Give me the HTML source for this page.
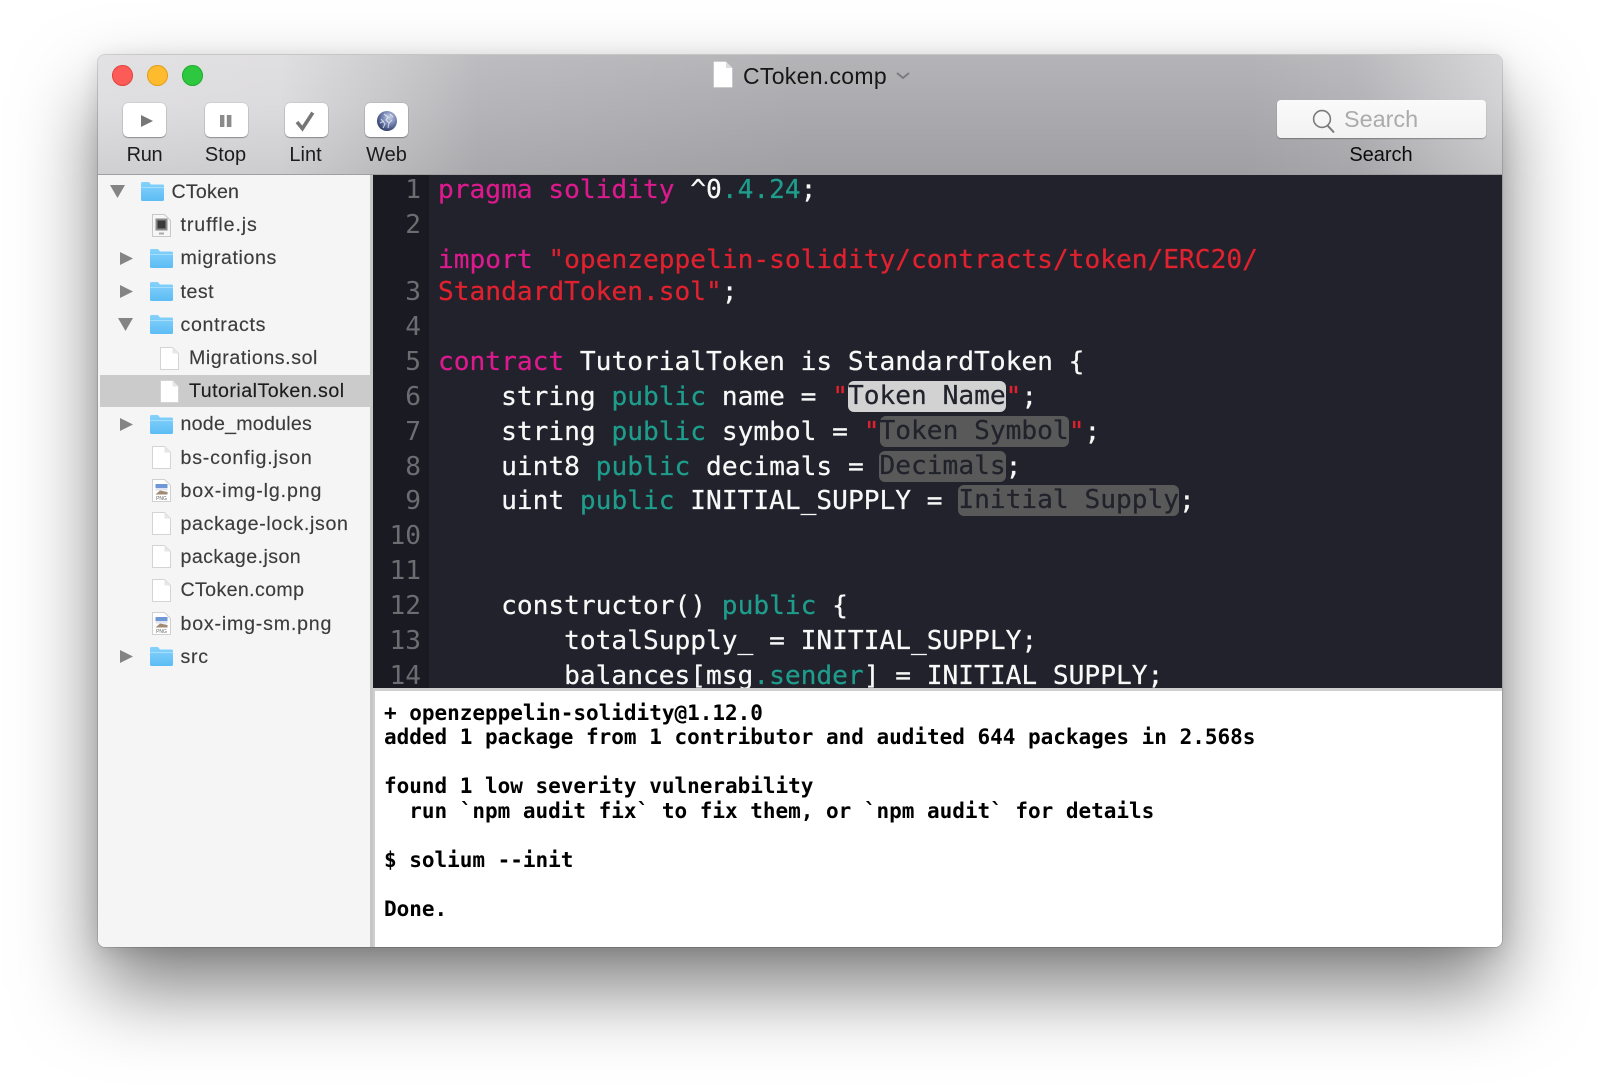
<!DOCTYPE html>
<html><head><meta charset="utf-8"><style>
html,body{margin:0;padding:0;background:#fff;width:1600px;height:1087px;overflow:hidden}
*{box-sizing:border-box}
#win{position:absolute;left:98px;top:55px;width:1404px;height:892px;border-radius:7px;box-shadow:0 42px 80px 0 rgba(0,0,0,.5),0 4px 20px rgba(0,0,0,.12),0 0 0 1px rgba(0,0,0,.13);overflow:hidden;background:#f5f5f5}
#bar{position:absolute;z-index:2;left:0;top:0;width:1404px;height:120px;background:linear-gradient(180deg,rgba(255,255,255,.1),rgba(255,255,255,0) 40%,rgba(0,0,0,.07)),linear-gradient(90deg,#dfdee0 0,#dcdbdd 13%,#b6b5b9 27%,#acabaf 50%,#acabaf 82%,#b4b3b7 90%,#d3d2d5 100%);border-bottom:1px solid #9f9fa0}
.abs{position:absolute}
.light{position:absolute;top:9.5px;width:21px;height:21px;border-radius:50%}
.btn{position:absolute;top:48px;width:43px;height:34px;background:#fff;border-radius:5px;box-shadow:0 1px 1px rgba(0,0,0,.3),0 0 0 .5px rgba(0,0,0,.12)}
.lab{position:absolute;top:86px;height:28px;font:20px/28px "Liberation Sans",sans-serif;color:#1c1c1c;text-align:center}
#side{position:absolute;left:0;top:119px;width:275px;height:773px;background:#f5f5f5;border-right:3px solid #c6c6c6}
.row{position:absolute;height:28px;margin-top:.5px;font:19.6px/28px "Liberation Sans",sans-serif;color:#3c3c3c;white-space:pre;-webkit-text-stroke:.15px #3c3c3c}
svg{position:absolute;overflow:visible}
#editor{position:absolute;left:275px;top:120px;width:1129px;height:513px;background:#21222b;overflow:hidden}
#gut{position:absolute;left:0;top:0;width:56px;height:514px;background:#191a22}
.n,.c{position:absolute;height:34px;font:26.2px/34px "DejaVu Sans Mono",monospace;white-space:pre}
.n{left:0;width:48px;text-align:right;color:#6c6d71}
.c{left:65px;color:#f8f8f8;-webkit-text-stroke:.25px currentColor}
.p{color:#dc1a8e}.r{color:#e0212f}.t{color:#1e9c8c}
.h{background:#595959;color:#21222b;border-radius:6px;display:inline-block;height:31px;line-height:31px;vertical-align:top;margin-top:1px}
.h.a{background:#d2d2d2}
#term{position:absolute;left:275px;top:633px;width:1129px;height:259px;background:#fff;border-top:3px solid #cfcfcf;border-left:2px solid #cfcfcf}
.l{position:absolute;left:9px;height:24px;font:bold 21px/24px "DejaVu Sans Mono",monospace;color:#000;white-space:pre;letter-spacing:-.015px}
</style></head><body>
<div id="win">
<div id="bar">
<div class="light" style="left:14px;background:#fc5b57;box-shadow:inset 0 0 0 1px #e2463f"></div>
<div class="light" style="left:49px;background:#ffbb2e;box-shadow:inset 0 0 0 1px #e09e1e"></div>
<div class="light" style="left:84px;background:#2dc840;box-shadow:inset 0 0 0 1px #22ac30"></div>

<svg style="left:615px;top:6px" width="20" height="27" viewBox="0 0 20 27"><path d="M.5 .5H13L19.5 7V26.5H.5Z" fill="#fff" stroke="#bdbdbd" stroke-width=".6"/><path d="M13 .5V7H19.5Z" fill="#dcdcdc"/></svg>
<div class="abs" style="left:645px;top:5px;font:23px/32px 'Liberation Sans',sans-serif;color:#161616;white-space:pre;letter-spacing:.3px">CToken.comp</div>
<svg style="left:798px;top:17px" width="14" height="7" viewBox="0 0 14 7"><path d="M1 1L7 6L13 1" fill="none" stroke="#7c7c80" stroke-width="2"/></svg>

<div class="btn" style="left:25px"><svg style="left:18px;top:11.5px" width="12" height="12" viewBox="0 0 12 12"><path d="M0 0L12 6L0 12Z" fill="#777"/></svg></div>
<div class="btn" style="left:107px"><svg style="left:15px;top:11.5px" width="12" height="12" viewBox="0 0 12 12"><path d="M0 0H4.4V12H0ZM6.8 0H11.4V12H6.8Z" fill="#8a8a8a"/></svg></div>
<div class="btn" style="left:187px"><svg style="left:10px;top:8px" width="20" height="20" viewBox="0 0 20 20"><path d="M2 11L7.4 17.6L17.8 1.6" fill="none" stroke="#767676" stroke-width="3.6"/></svg></div>
<div class="btn" style="left:267px"><svg style="left:12px;top:7.5px" width="20" height="20" viewBox="0 0 20 20"><defs><radialGradient id="g" cx=".62" cy=".32" r=".75"><stop offset="0" stop-color="#c8d1e8"/><stop offset=".5" stop-color="#6f7fae"/><stop offset="1" stop-color="#2a3560"/></radialGradient></defs><circle cx="10" cy="10" r="10" fill="url(#g)"/><path d="M7 3L11 6L9 9L12 12L15 9M4 8L8 13L6 17M13 3L16 6M3 12L7 10M12 12L11 17" fill="none" stroke="#eef1f8" stroke-width="1.1" opacity=".75"/></svg></div>
<div class="lab" style="left:6.5px;width:80px;letter-spacing:-.3px">Run</div>
<div class="lab" style="left:87.5px;width:80px">Stop</div>
<div class="lab" style="left:167.5px;width:80px">Lint</div>
<div class="lab" style="left:248.5px;width:80px">Web</div>

<div class="abs" style="left:1179px;top:45px;width:209px;height:38px;border-radius:4px;background:linear-gradient(#fafafa,#f2f2f2);box-shadow:0 1px 1px rgba(0,0,0,.3)"></div>
<svg style="left:1214px;top:54.5px" width="24" height="24" viewBox="0 0 24 24"><circle cx="10" cy="9" r="8.4" fill="none" stroke="#7a7a7a" stroke-width="1.6"/><path d="M15.5 15.5L22 22.5" stroke="#7a7a7a" stroke-width="2" fill="none"/></svg>
<div class="abs" style="left:1246px;top:47px;font:23.4px/34px 'Liberation Sans',sans-serif;color:#ababab">Search</div>
<div class="lab" style="left:1233px;width:100px;color:#0c0c0c">Search</div>
</div>

<div id="side">
<svg width="0" height="0" style="position:absolute"><defs>
<linearGradient id="fg" x1="0" y1="0" x2="0" y2="1"><stop offset="0" stop-color="#86d2fb"/><stop offset="1" stop-color="#5cbcf4"/></linearGradient>
<symbol id="folder" viewBox="0 0 23 19"><path d="M1.5 0H8L10 2.5H21.5A1.5 1.5 0 0 1 23 4V17.5A1.5 1.5 0 0 1 21.5 19H1.5A1.5 1.5 0 0 1 0 17.5V1.5A1.5 1.5 0 0 1 1.5 0Z" fill="url(#fg)"/><rect x="0" y="5" width="23" height="1" fill="#a5defc"/></symbol>
<symbol id="file" viewBox="0 0 19 23"><path d="M.5 .5H12.5L18.5 6.5V22.5H.5Z" fill="#fff" stroke="#d4d4d4"/><path d="M12.5 .5V6.5H18.5Z" fill="#e6e6e6"/></symbol>
<symbol id="png" viewBox="0 0 19 23"><path d="M.5 .5H12.5L18.5 6.5V22.5H.5Z" fill="#fff" stroke="#d0d0d0"/><rect x="3.5" y="5" width="12" height="4" fill="#6f97d6"/><rect x="3.5" y="9" width="12" height="2.5" fill="#dfe5ee"/><path d="M3.5 15.5L8 11.5L15.5 13V15.5Z" fill="#a08a72"/><text x="9.5" y="21" font-family="Liberation Sans,sans-serif" font-size="5" text-anchor="middle" fill="#666">PNG</text></symbol>
<symbol id="js" viewBox="0 0 19 23"><path d="M.5 .5H12.5L18.5 6.5V22.5H.5Z" fill="#f6f6f6" stroke="#c8c8c8"/><rect x="3.5" y="4.5" width="12" height="12" fill="#8a8a8a"/><rect x="5.5" y="6.5" width="8" height="8" fill="#3a3a3a"/><rect x="7" y="18.5" width="5" height="2" fill="#aaa"/></symbol>
<symbol id="tr" viewBox="0 0 13 13"><path d="M0 0L13 6.5L0 13Z" fill="#848484"/></symbol>
<symbol id="td" viewBox="0 0 15 13"><path d="M0 0H15L7.5 13Z" fill="#848484"/></symbol>
</defs></svg>

<svg style="left:12px;top:11px" width="15" height="13"><use href="#td"/></svg>
<svg style="left:43px;top:8px" width="23" height="19"><use href="#folder"/></svg>
<div class="row" style="left:73.5px;top:3.5px;letter-spacing:.2px">CToken</div>

<svg style="left:53.5px;top:40px" width="19" height="23"><use href="#js"/></svg>
<div class="row" style="left:82.5px;top:36.7px;letter-spacing:.9px">truffle.js</div>

<svg style="left:22px;top:77.5px" width="13" height="13"><use href="#tr"/></svg>
<svg style="left:51.5px;top:74.5px" width="23" height="19"><use href="#folder"/></svg>
<div class="row" style="left:82.5px;top:69.9px;letter-spacing:.6px">migrations</div>

<svg style="left:22px;top:110.5px" width="13" height="13"><use href="#tr"/></svg>
<svg style="left:51.5px;top:107.5px" width="23" height="19"><use href="#folder"/></svg>
<div class="row" style="left:82.5px;top:103.1px;letter-spacing:.5px">test</div>

<svg style="left:20px;top:144px" width="15" height="13"><use href="#td"/></svg>
<svg style="left:51.5px;top:141px" width="23" height="19"><use href="#folder"/></svg>
<div class="row" style="left:82.5px;top:136.3px;letter-spacing:.68px">contracts</div>

<svg style="left:62px;top:172.5px" width="19" height="23"><use href="#file"/></svg>
<div class="row" style="left:91px;top:169.5px;letter-spacing:.58px">Migrations.sol</div>

<div class="abs" style="left:2px;top:201px;width:271px;height:32px;background:#cbcbcb"></div>
<svg style="left:62px;top:205.7px" width="19" height="23"><use href="#file"/></svg>
<div class="row" style="left:91px;top:202.7px;color:#1c1c1c;letter-spacing:.48px;-webkit-text-stroke-color:#1c1c1c">TutorialToken.sol</div>

<svg style="left:22px;top:243.5px" width="13" height="13"><use href="#tr"/></svg>
<svg style="left:51.5px;top:240.5px" width="23" height="19"><use href="#folder"/></svg>
<div class="row" style="left:82.5px;top:235.9px;letter-spacing:.25px">node_modules</div>

<svg style="left:53.5px;top:271.5px" width="19" height="23"><use href="#file"/></svg>
<div class="row" style="left:82.5px;top:269.1px;letter-spacing:.8px">bs-config.json</div>

<svg style="left:53.5px;top:305px" width="19" height="23"><use href="#png"/></svg>
<div class="row" style="left:82.5px;top:302.3px;letter-spacing:.87px">box-img-lg.png</div>

<svg style="left:53.5px;top:338px" width="19" height="23"><use href="#file"/></svg>
<div class="row" style="left:82.5px;top:335.5px;letter-spacing:.66px">package-lock.json</div>

<svg style="left:53.5px;top:371px" width="19" height="23"><use href="#file"/></svg>
<div class="row" style="left:82.5px;top:368.7px;letter-spacing:.43px">package.json</div>

<svg style="left:53.5px;top:404.5px" width="19" height="23"><use href="#file"/></svg>
<div class="row" style="left:82.5px;top:401.9px;letter-spacing:.37px">CToken.comp</div>

<svg style="left:53.5px;top:437.5px" width="19" height="23"><use href="#png"/></svg>
<div class="row" style="left:82.5px;top:435.1px;letter-spacing:.8px">box-img-sm.png</div>

<svg style="left:22px;top:476px" width="13" height="13"><use href="#tr"/></svg>
<svg style="left:51.5px;top:473px" width="23" height="19"><use href="#folder"/></svg>
<div class="row" style="left:82.5px;top:468.3px;letter-spacing:.7px">src</div>
</div>

<div id="editor">
<div id="gut"></div>
<div class="n" style="top:-2px">1</div>
<div class="n" style="top:32.9px">2</div>
<div class="n" style="top:100px">3</div>
<div class="n" style="top:135px">4</div>
<div class="n" style="top:169.8px">5</div>
<div class="n" style="top:204.6px">6</div>
<div class="n" style="top:239.6px">7</div>
<div class="n" style="top:274.5px">8</div>
<div class="n" style="top:309.4px">9</div>
<div class="n" style="top:344.2px">10</div>
<div class="n" style="top:379.2px">11</div>
<div class="n" style="top:414px">12</div>
<div class="n" style="top:449px">13</div>
<div class="n" style="top:483.8px">14</div>

<div class="c" style="top:-2px"><span class="p">pragma solidity</span> ^0<span class="t">.4.24</span>;</div>
<div class="c" style="top:67.9px"><span class="p">import</span> <span class="r">"openzeppelin-solidity/contracts/token/ERC20/</span></div>
<div class="c" style="top:100px"><span class="r">StandardToken.sol"</span>;</div>
<div class="c" style="top:169.8px"><span class="p">contract</span> TutorialToken is StandardToken {</div>
<div class="c" style="top:204.6px">    string <span class="t">public</span> name = <span class="r">"</span><span class="h a">Token Name</span><span class="r">"</span>;</div>
<div class="c" style="top:239.6px">    string <span class="t">public</span> symbol = <span class="r">"</span><span class="h">Token Symbol</span><span class="r">"</span>;</div>
<div class="c" style="top:274.5px">    uint8 <span class="t">public</span> decimals = <span class="h">Decimals</span>;</div>
<div class="c" style="top:309.4px">    uint <span class="t">public</span> INITIAL_SUPPLY = <span class="h">Initial Supply</span>;</div>
<div class="c" style="top:414px">    constructor() <span class="t">public</span> {</div>
<div class="c" style="top:449px">        totalSupply_ = INITIAL_SUPPLY;</div>
<div class="c" style="top:483.8px">        balances[msg<span class="t">.sender</span>] = INITIAL_SUPPLY;</div>
</div>

<div id="term">
<div class="l" style="top:10px">+ openzeppelin-solidity@1.12.0</div>
<div class="l" style="top:34px">added 1 package from 1 contributor and audited 644 packages in 2.568s</div>
<div class="l" style="top:83px">found 1 low severity vulnerability</div>
<div class="l" style="top:108px">  run `npm audit fix` to fix them, or `npm audit` for details</div>
<div class="l" style="top:157px">$ solium --init</div>
<div class="l" style="top:206px">Done.</div>
</div>
</div>
</body></html>
